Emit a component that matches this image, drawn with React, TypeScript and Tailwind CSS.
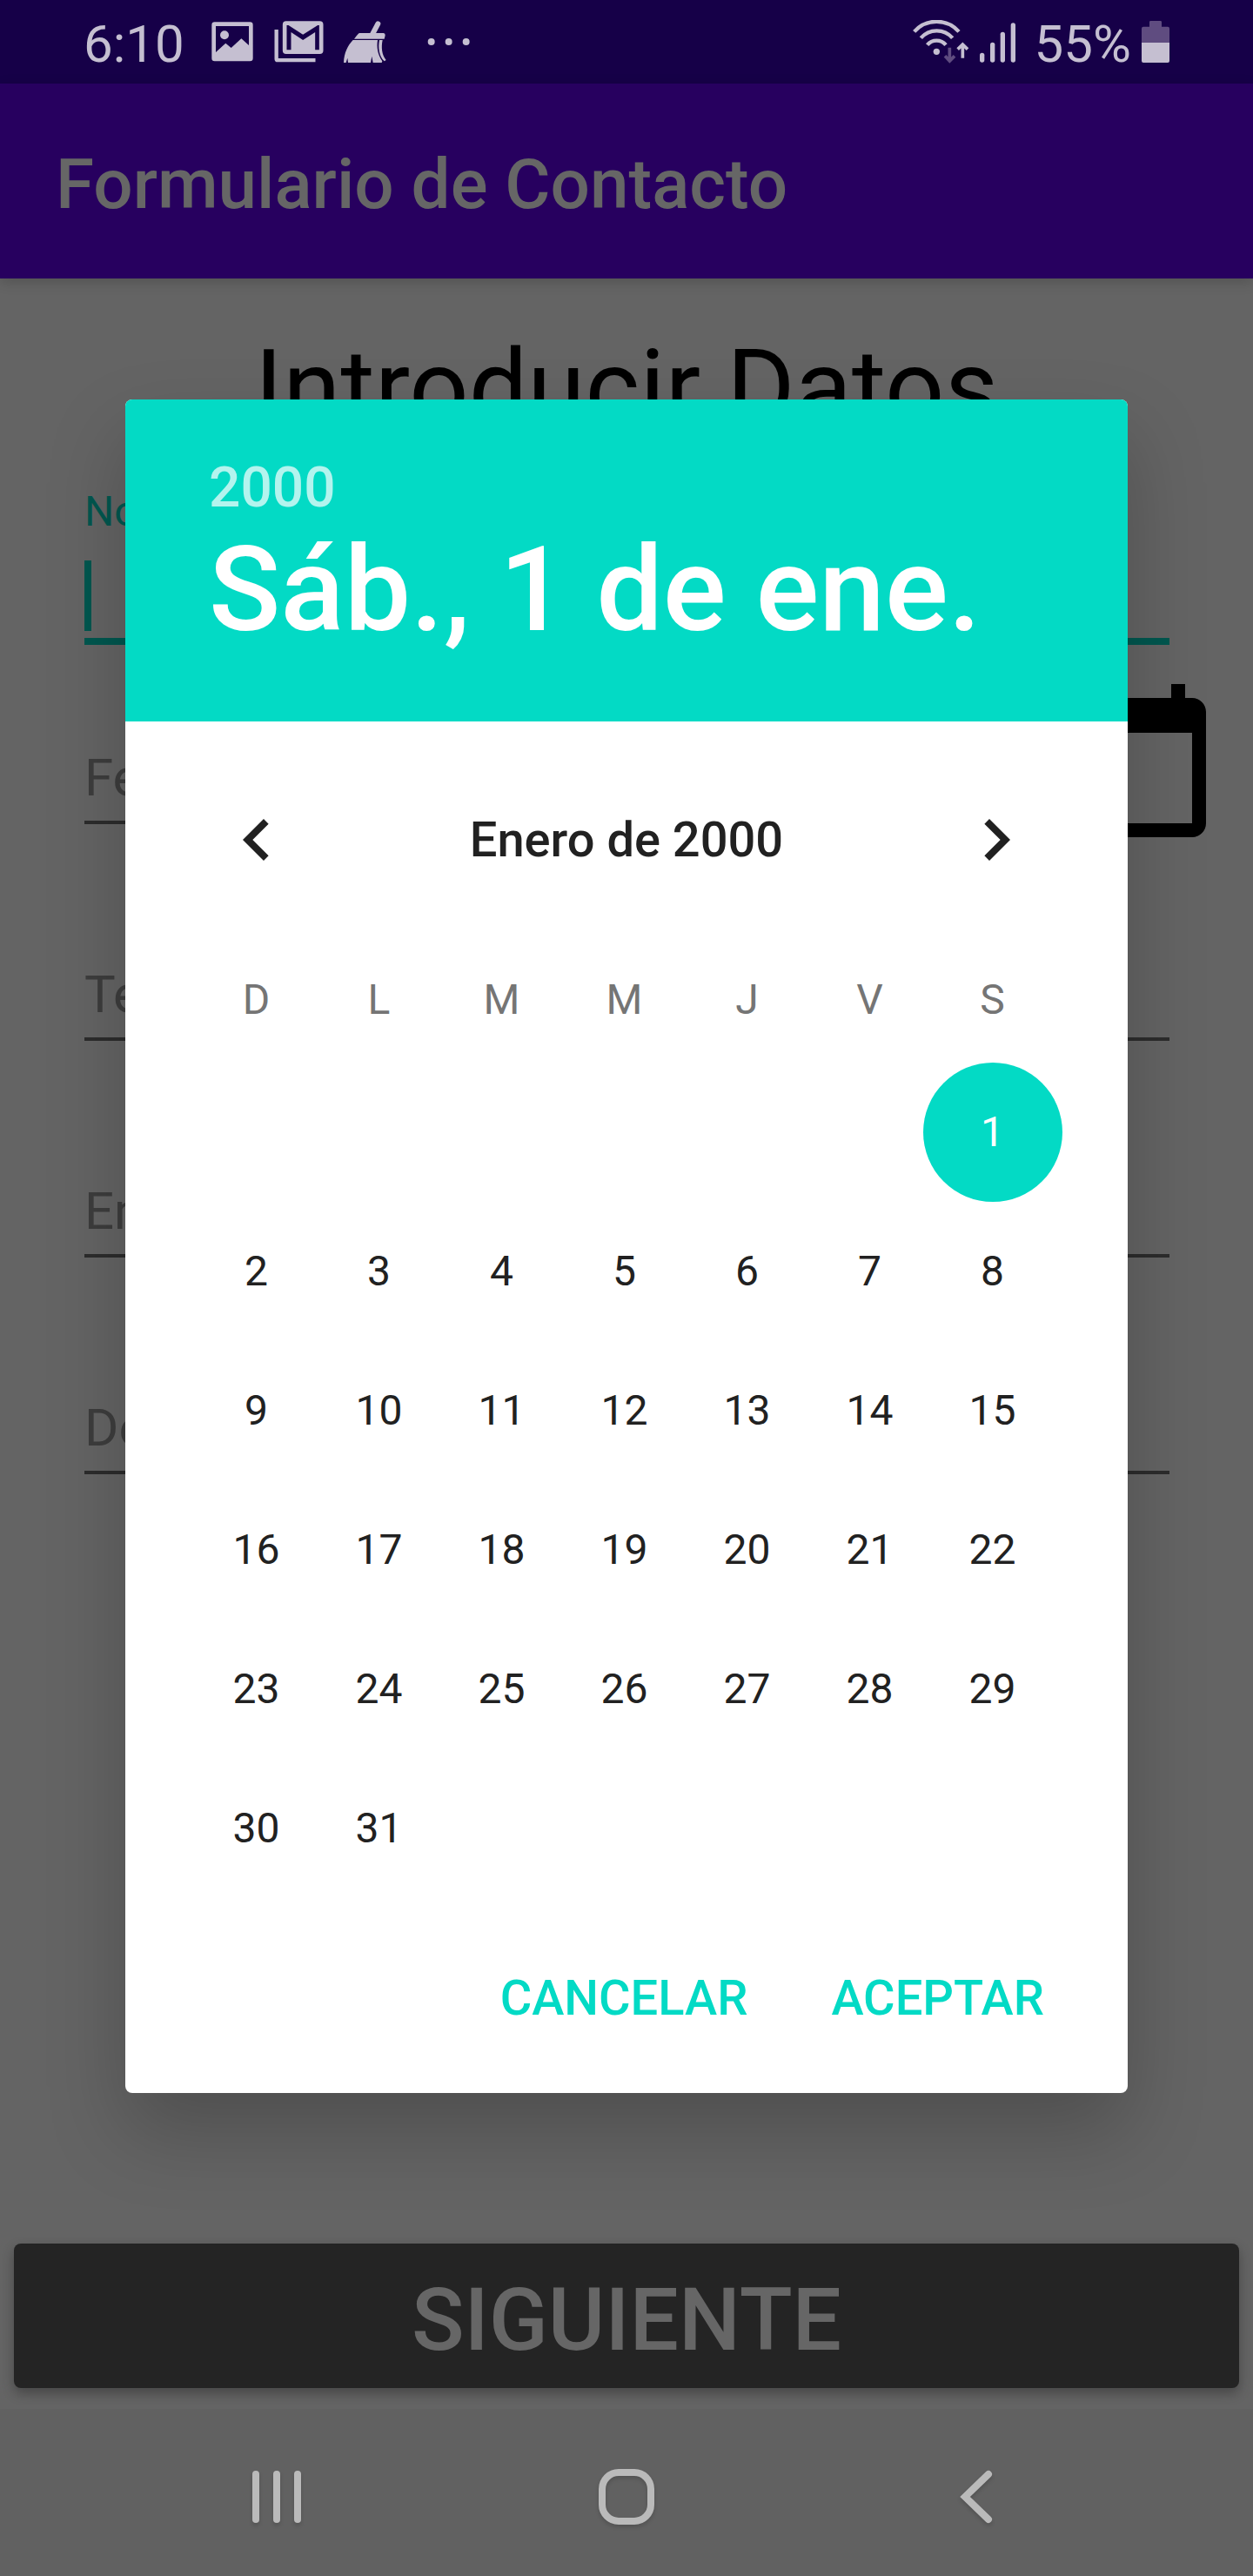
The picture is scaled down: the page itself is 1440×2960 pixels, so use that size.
const weekdays = ["D", "L", "M", "M", "J", "V", "S"];
const days = Array.from({ length: 37 }, (_, i) => (i < 6 ? null : i - 5));

const BRIGHT = "#c5bfd1";
const DIM = "#5f4c80";

function StatusBar() {
  return (
    <header className="flex h-24 shrink-0 items-center justify-between bg-[#160048] pr-[96px] pl-24 text-[60px] leading-[70px] text-[#c5bfd1]">
      <div className="flex h-full items-center">
        <span className="w-[147px] pt-[5px]">6:10</span>
        {/* picture */}
        <svg className="h-[46px] w-[48px]" viewBox="489 74 144 138" fill={BRIGHT}>
          <path
            fillRule="evenodd"
            d="M500 75H622Q632 75 632 85V200Q632 210 622 210H500Q490 210 490 200V85Q490 75 500 75ZM504 89V179L538 148L557 164L592 132L618 155V89Z"
          />
          <circle cx="534" cy="120" r="15" />
        </svg>
        {/* mail */}
        <svg className="ml-[24px] h-[48px] w-[57px]" viewBox="704 72 170 144" fill={BRIGHT}>
          <path d="M705 102H718V201H846V214H716Q705 214 705 203Z" />
          <path
            fillRule="evenodd"
            d="M745 73H861Q873 73 873 85V174Q873 186 861 186H745Q733 186 733 174V85Q733 73 745 73ZM747 87V172H762V111L803 138L845 111V172H859V87H854L803 119L753 87Z"
          />
        </svg>
        {/* broom */}
        <svg className="ml-[22px] h-[50px] w-[52px]" viewBox="940 71 156 150" fill={BRIGHT}>
          <path d="M1061 84L1042 120" stroke={BRIGHT} strokeWidth="18" strokeLinecap="round" />
          <path d="M998 116H1080Q1087 117 1086 124L1083 136H979Q987 125 993 119Q995 116 998 116Z" />
          <path d="M975 140H1060C1056 165 1060 190 1076 213L1074 218H1044L1040 196L1036 218H958L956 202L951 218H943C944 185 957 158 975 140Z" />
          <path d="M1066 140H1077C1072 165 1074 190 1089 209L1083 213C1064 195 1061 165 1066 140Z" />
        </svg>
        {/* overflow dots */}
        <svg className="ml-[45px] h-[8px] w-[50px]" viewBox="0 0 150 24" fill={BRIGHT}>
          <circle cx="14" cy="12" r="12" />
          <circle cx="74" cy="12" r="12" />
          <circle cx="134" cy="12" r="12" />
        </svg>
      </div>
      <div className="flex h-full items-center">
        <svg className="h-[50px] w-[120px]" viewBox="54 70 360 150" fill={BRIGHT}>
          <g fill="none" stroke={BRIGHT} strokeWidth="13">
            <path d="M62 110A103 103 0 0 1 216 110" />
            <path d="M85 132A72 72 0 0 1 194 132" />
            <path d="M107 156A41 41 0 0 1 171 156" />
          </g>
          <circle cx="139" cy="179" r="11" />
          <path
            d="M184 165V210M168 194L184 211L201 194"
            fill="none"
            stroke={DIM}
            strokeWidth="11"
          />
          <path
            d="M229 201V155M212 171L229 154L246 171"
            fill="none"
            stroke={BRIGHT}
            strokeWidth="11"
          />
          <rect x="288" y="183" width="16" height="33" rx="8" />
          <rect x="324" y="147" width="16" height="69" rx="8" />
          <rect x="359" y="111" width="16" height="105" rx="8" />
          <rect x="395" y="80" width="16" height="136" rx="8" />
        </svg>
        <span className="ml-[21px] pt-[5px]">55%</span>
        <svg className="ml-[12px] h-[48px] w-[32px]" viewBox="846 72 96 144">
          <path
            fill={DIM}
            d="M877 72H911Q915 72 915 76V92H936Q942 92 942 98V147H846V98Q846 92 852 92H873V76Q873 72 877 72Z"
          />
          <path fill={BRIGHT} d="M846 147H942V210Q942 216 936 216H852Q846 216 846 210Z" />
        </svg>
      </div>
    </header>
  );
}

function Field({ label }: { label: string }) {
  return (
    <div className="flex h-[249px] items-end border-b-4 border-[#2c2c2c] pb-[13px] text-[60px] leading-[72px] text-[#3d3d3d]">
      <span>{label}</span>
    </div>
  );
}

function ContactForm() {
  return (
    <main className="flex h-[2448px] shrink-0 flex-col bg-[#646464]">
      <h1 className="mt-[46px] text-center text-[120px] leading-[160px] text-black">
        Introducir Datos
      </h1>
      <div className="mt-[34px] pr-24 pl-[97px]">
        <div className="border-b-8 border-[#01574f] pb-2 text-[#01574f]">
          <div className="text-5xl leading-[56px]">Nombre</div>
          <div className="mt-[28px] h-[81px] w-2 bg-[#01574f]" />
        </div>
        <div className="flex h-[206px] items-end">
          <div className="flex-1">
            <Field label="Fecha de Nacimiento" />
          </div>
          <svg
            className="-mr-[58px] -mb-[23px] h-[192px] w-[192px] shrink-0"
            viewBox="0 0 24 24"
          >
            <path d="M20 3h-1V1h-2v2H7V1H5v2H4c-1.1 0-2 .9-2 2v16c0 1.1.9 2 2 2h16c1.1 0 2-.9 2-2V5c0-1.1-.9-2-2-2zm0 18H4V8h16v13z" />
          </svg>
        </div>
        <Field label="Teléfono" />
        <Field label="Email" />
        <Field label="Descripción" />
      </div>
      <button className="mx-4 mt-auto mb-6 h-[166px] rounded-lg bg-[#242424] pt-[9px] text-[100px] leading-none font-medium text-[#666666] shadow-[0_6px_14px_rgba(0,0,0,0.3)]">
        SIGUIENTE
      </button>
    </main>
  );
}

function NavigationBar() {
  return (
    <nav className="flex h-48 shrink-0 items-center justify-center gap-[322px] bg-[#616161] pt-[10px] text-[#bababa]">
      <svg className="h-20 w-20 drop-shadow-[0_3px_2px_rgba(0,0,0,0.15)]" viewBox="0 0 80 80" fill="currentColor">
        <rect x="12" y="10" width="8" height="60" rx="4" />
        <rect x="36" y="10" width="8" height="60" rx="4" />
        <rect x="60" y="10" width="8" height="60" rx="4" />
      </svg>
      <svg className="h-20 w-20 drop-shadow-[0_3px_2px_rgba(0,0,0,0.15)]" viewBox="0 0 80 80" fill="none" stroke="currentColor" strokeWidth="8">
        <rect x="12" y="12" width="56" height="56" rx="19" />
      </svg>
      <svg className="h-20 w-20 drop-shadow-[0_3px_2px_rgba(0,0,0,0.15)]" viewBox="0 0 80 80" fill="none" stroke="currentColor" strokeWidth="8" strokeLinecap="round">
        <path d="M54 14L27 40L54 66" />
      </svg>
    </nav>
  );
}

function DatePicker() {
  return (
    <section
      role="dialog"
      className="absolute top-[459px] left-36 z-10 flex h-[1946px] w-[1152px] flex-col overflow-hidden rounded-lg bg-white shadow-[0_44px_90px_rgba(0,0,0,0.21)]"
    >
      <div className="h-[370px] shrink-0 bg-[#03dac5] pt-16 pl-24 font-medium">
        <div className="text-[64px] leading-[75px] text-white/70">2000</div>
        <div className="text-[136px] leading-[160px] whitespace-nowrap text-white">
          Sáb., 1 de ene.
        </div>
      </div>
      <div className="mt-[88px] flex h-24 items-center justify-between px-[103px] text-[#212121]">
        <svg className="h-24 w-24" viewBox="0 0 24 24" fill="currentColor">
          <path d="M15.41 7.41L14 6l-6 6 6 6 1.41-1.41L10.83 12z" />
        </svg>
        <span className="text-[56px] leading-none font-medium">Enero de 2000</span>
        <svg className="h-24 w-24" viewBox="0 0 24 24" fill="currentColor">
          <path d="M10 6L8.59 7.41 13.17 12l-4.58 4.59L10 18l6-6z" />
        </svg>
      </div>
      <div className="mt-24 ml-20 grid w-[987px] grid-cols-7 text-center text-5xl leading-[80px] text-[#757575]">
        {weekdays.map((d, i) => (
          <span key={i}>{d}</span>
        ))}
      </div>
      <div className="mt-8 ml-20 grid w-[987px] grid-cols-7 text-5xl text-[#212121]">
        {days.map((d, i) => (
          <div key={i} className="flex h-40 items-center justify-center">
            {d === 1 ? (
              <span className="flex h-40 w-40 shrink-0 items-center justify-center rounded-full bg-[#03dac5] text-white">
                1
              </span>
            ) : (
              d
            )}
          </div>
        ))}
      </div>
      <div className="mt-[67px] flex h-24 items-center justify-end gap-24 pr-24 text-[56px] leading-none font-medium text-[#03dac5]">
        <button>CANCELAR</button>
        <button>ACEPTAR</button>
      </div>
    </section>
  );
}

export default function App() {
  return (
    <div className="relative flex h-[2960px] w-[1440px] flex-col overflow-hidden font-[Roboto,sans-serif]">
      <StatusBar />
      <div className="z-[1] flex h-56 shrink-0 items-center bg-[#27005f] pt-2 pl-16 text-[80px] leading-none font-medium text-[#666666] shadow-[0_4px_14px_rgba(0,0,0,0.18)]">
        Formulario de Contacto
      </div>
      <ContactForm />
      <NavigationBar />
      <DatePicker />
    </div>
  );
}
